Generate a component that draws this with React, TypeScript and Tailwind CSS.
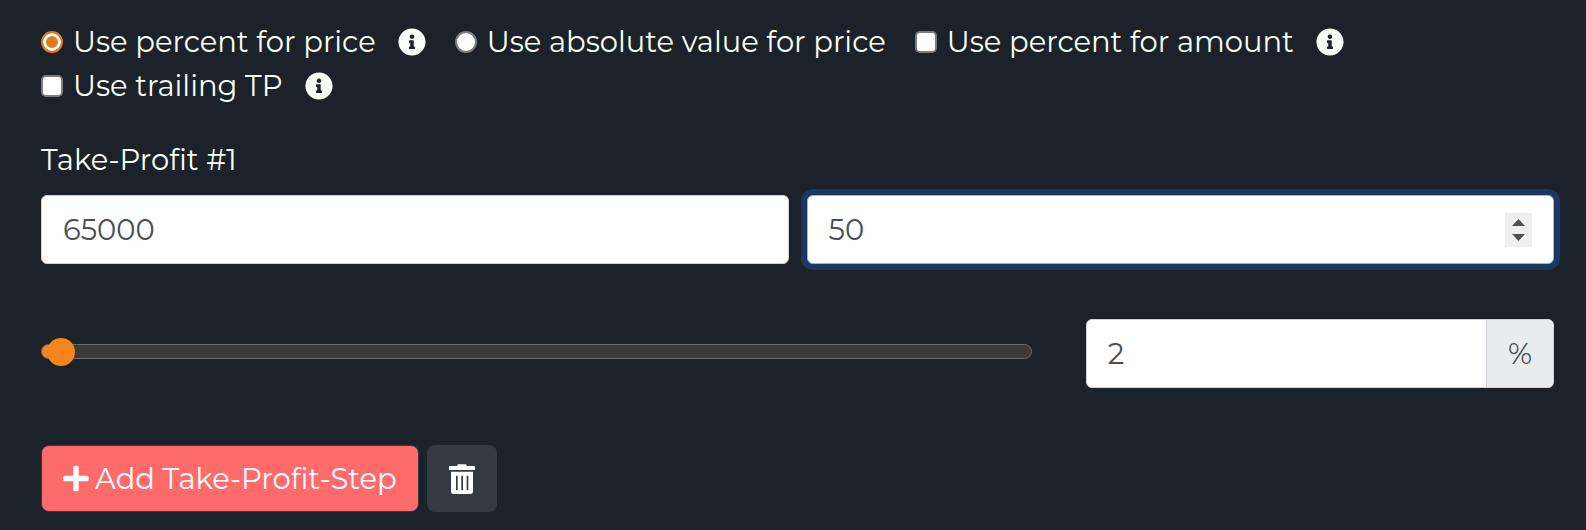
import { useState } from "react";
import type { ReactNode } from "react";
import { FaInfoCircle, FaPlus } from "react-icons/fa";

function InfoButton({ label }: { label: string }) {
  return (
    <button type="button" aria-label={label} className="ml-[22px] text-[28px]">
      <FaInfoCircle />
    </button>
  );
}

function TrashIcon() {
  return (
    <svg width="26" height="30" viewBox="0 0 78 90" fill="currentColor" aria-hidden="true">
      <path d="M24 6 L27 1 H51 L54 6 H75 Q78 6 78 9 V18 H0 V9 Q0 6 3 6 Z" />
      <path
        fillRule="evenodd"
        d="M6 23 H72 V83 Q72 90 65 90 H13 Q6 90 6 83 Z M21 35 V79 H26 V35 Z M37 35 V79 H42 V35 Z M53 35 V79 H58 V35 Z"
      />
    </svg>
  );
}

function Option({ id, control, label, info }: { id: string; control: ReactNode; label: string; info?: string }) {
  return (
    <div className="flex items-center">
      {control}
      <label htmlFor={id} className="ml-[10px]">
        {label}
      </label>
      {info && <InfoButton label={info} />}
    </div>
  );
}

const radioClass =
  "size-[22px] shrink-0 appearance-none rounded-full border-2 border-[#7b7d80] bg-white checked:border-[#e27a1c] checked:bg-[#e27a1c] checked:shadow-[inset_0_0_0_3px_white]";
const checkClass =
  "size-[22px] shrink-0 appearance-none rounded-[5px] border-2 border-[#7b7d80] bg-white checked:bg-[#e27a1c]";
const numberClass =
  "w-full min-w-0 appearance-none bg-transparent outline-none [-moz-appearance:textfield] [&::-webkit-inner-spin-button]:appearance-none";

const MAX_PERCENT = 350;

export default function App() {
  const [mode, setMode] = useState("percent");
  const [price, setPrice] = useState(65000);
  const [amount, setAmount] = useState(50);
  const [percent, setPercent] = useState(2);
  const share = (percent / MAX_PERCENT) * 100;
  const filled = `linear-gradient(to right, #fa841c ${share + 1}%, #3b3b3b ${share + 1}%)`;

  return (
    <main className="min-h-screen bg-[#1c2229] pt-5 pr-8 pb-4 pl-[41px] font-[Montserrat,Inter,sans-serif] text-[29px] leading-[44px] text-[#f7fff7]">
      <div className="flex flex-wrap gap-x-[29px]">
        <Option
          id="price-percent"
          label="Use percent for price"
          info="About percent for price"
          control={
            <input
              id="price-percent"
              type="radio"
              name="mode"
              checked={mode === "percent"}
              onChange={() => setMode("percent")}
              className={radioClass}
            />
          }
        />
        <Option
          id="price-absolute"
          label="Use absolute value for price"
          control={
            <input
              id="price-absolute"
              type="radio"
              name="mode"
              checked={mode === "absolute"}
              onChange={() => setMode("absolute")}
              className={radioClass}
            />
          }
        />
        <Option
          id="amount-percent"
          label="Use percent for amount"
          info="About percent for amount"
          control={<input id="amount-percent" type="checkbox" className={checkClass} />}
        />
        <Option
          id="trailing"
          label="Use trailing TP"
          info="About trailing take profit"
          control={<input id="trailing" type="checkbox" className={checkClass} />}
        />
      </div>

      <label htmlFor="price" className="mt-[30px] block">
        Take-Profit #1
      </label>
      <div className="mt-[13px] grid grid-cols-2 gap-[18px] text-[#495057]">
        <div className="flex h-[69px] items-center rounded-md border border-[#ced4da] bg-white px-[21px]">
          <input
            id="price"
            type="number"
            value={price}
            onChange={(e) => setPrice(Number(e.target.value))}
            className={numberClass}
          />
        </div>
        <div className="flex h-[69px] items-center rounded-md border border-[#80bdff] bg-white px-[21px] ring-6 ring-[#1b3860]">
          <input
            type="number"
            aria-label="Amount"
            value={amount}
            onChange={(e) => setAmount(Number(e.target.value))}
            className={numberClass}
          />
          <div className="flex h-[34px] w-[27px] shrink-0 flex-col bg-[#efefef] text-[#505050]">
            <button
              type="button"
              aria-label="Increase amount"
              onClick={() => setAmount(amount + 1)}
              className="flex flex-1 items-end justify-center pb-1"
            >
              <svg width="13" height="7" viewBox="0 0 13 7" fill="currentColor">
                <path d="M0 7 6.500 0 13 7z" />
              </svg>
            </button>
            <button
              type="button"
              aria-label="Decrease amount"
              onClick={() => setAmount(amount - 1)}
              className="flex flex-1 items-start justify-center pt-1"
            >
              <svg width="13" height="7" viewBox="0 0 13 7" fill="currentColor">
                <path d="M0 0h13L6.500 7z" />
              </svg>
            </button>
          </div>
        </div>
      </div>

      <div className="mt-[55px] grid grid-cols-3 items-center gap-[54px]">
        <input
          type="range"
          aria-label="Percent"
          min={0}
          max={MAX_PERCENT}
          value={percent}
          onChange={(e) => setPercent(Number(e.target.value))}
          style={{ backgroundImage: filled }}
          className="col-span-2 -mt-1 h-[15px] w-full appearance-none rounded-full border border-[#6c6e70] outline-none [&::-webkit-slider-thumb]:size-7 [&::-webkit-slider-thumb]:appearance-none [&::-webkit-slider-thumb]:rounded-full [&::-webkit-slider-thumb]:bg-[#fa841c]"
        />
        <div className="flex h-[69px] items-stretch overflow-hidden rounded-md border border-[#ced4da] bg-white text-[#495057]">
          <input
            type="number"
            aria-label="Percent value"
            value={percent}
            onChange={(e) => setPercent(Number(e.target.value))}
            className={`${numberClass} px-[21px]`}
          />
          <span className="flex w-[67px] shrink-0 items-center justify-center border-l border-[#ced4da] bg-[#e9ebee]">
            %
          </span>
        </div>
      </div>

      <div className="mt-[57px] flex gap-2">
        <button
          type="button"
          className="flex h-[67px] items-center gap-[6px] rounded-lg border border-[#343a40] bg-[#ff6b6b] px-[21px] text-white"
        >
          <FaPlus className="h-[29px] w-[26px]" />
          Add Take-Profit-Step
        </button>
        <button
          type="button"
          aria-label="Delete step"
          className="flex h-[67px] w-[70px] items-center justify-center rounded-lg bg-[#343a40] text-white"
        >
          <TrashIcon />
        </button>
      </div>
    </main>
  );
}
